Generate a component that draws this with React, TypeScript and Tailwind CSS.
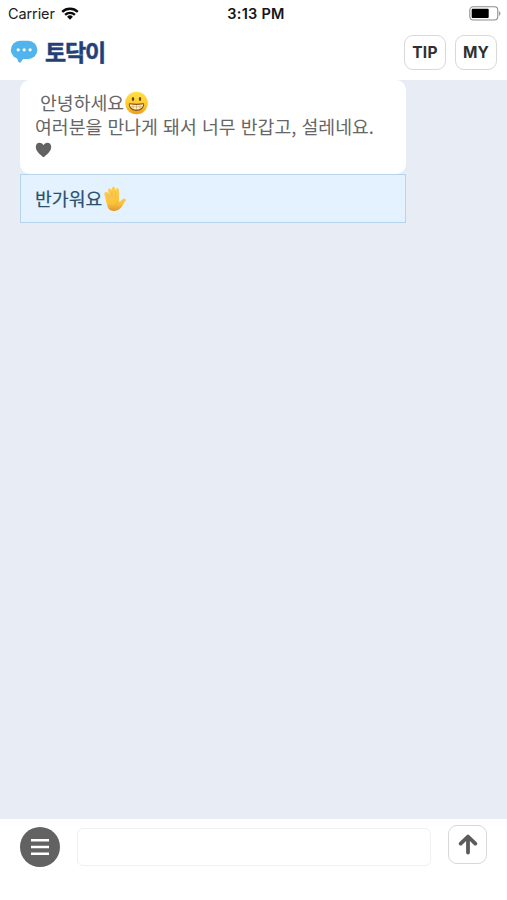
import React from 'react';

const WifiIcon: React.FC = () => (
  <svg className="-mt-[2px]" width="18" height="13" viewBox="0 0 18 13" fill="none" stroke="#0a0a0a" strokeWidth="2.3">
    <path d="M1.2 4.9a11.2 11.2 0 0 1 15.6 0" />
    <path d="M4.1 7.9a7 7 0 0 1 9.8 0" />
    <path d="M9 12.7 6.1 9.8a4.1 4.1 0 0 1 5.8 0z" fill="#0a0a0a" stroke="none" />
  </svg>
);

const BatteryIcon: React.FC = () => (
  <svg className="-mt-[2px]" width="32" height="15" viewBox="0 0 32 15">
    <rect x="0.8" y="0.8" width="28" height="13.2" rx="3.4" fill="#fff" stroke="#8c8c8c" strokeWidth="1.1" />
    <rect x="2.7" y="2.7" width="17" height="9.4" rx="1" fill="#000" />
    <path d="M30.2 5.2c1.6.5 1.6 4 0 4.5z" fill="#8c8c8c" />
  </svg>
);

const LogoIcon: React.FC = () => (
  <svg width="28" height="24" viewBox="0 0 28 24">
    <rect x="0.8" y="0.8" width="26.6" height="18.2" rx="9.1" fill="#51b4ed" />
    <path d="M6.6 17.5c1 1.400 1.500 5.200 3.200 5.200s2.200-3.200 3.600-4z" fill="#51b4ed" />
    <circle cx="8.2" cy="9.8" r="1.600" fill="#fff" />
    <circle cx="14.1" cy="9.8" r="1.600" fill="#fff" />
    <circle cx="20.1" cy="9.8" r="1.600" fill="#fff" />
  </svg>
);

const GrinEmoji: React.FC = () => (
  <svg width="25" height="24" viewBox="0 0 24 24">
    <defs>
      <linearGradient id="face" x1="0" y1="0" x2="0" y2="1">
        <stop offset="0" stopColor="#ffe146" />
        <stop offset="0.6" stopColor="#ffc92c" />
        <stop offset="1" stopColor="#f09a1d" />
      </linearGradient>
    </defs>
    <circle cx="12" cy="12" r="11.3" fill="url(#face)" />
    <ellipse cx="8.5" cy="8" rx="1.2" ry="1.9" fill="#6a3d12" />
    <ellipse cx="15.5" cy="8" rx="1.2" ry="1.9" fill="#6a3d12" />
    <path d="M4.3 13.2c0-.8.5-1 1.3-.9 4.2.6 8.6.6 12.800 0 .8-.1 1.300.1 1.300.9-.2 4-3.300 6.700-7.700 6.700s-7.500-2.700-7.700-6.700z" fill="#8a5314" />
    <path d="M5.300 13.300c4.400.8 9 .8 13.400 0-.2 3.200-2.900 5.300-6.700 5.300s-6.500-2.100-6.700-5.300z" fill="#fff3d0" />
    <path d="M5.600 15.800h12.800M8.500 13.800v4M12 14v4.500M15.500 13.800v4" stroke="#c79e5c" strokeWidth="0.6" />
  </svg>
);

const HandEmoji: React.FC = () => (
  <svg className="ml-px" width="25" height="26" viewBox="0 0 25 26">
    <defs>
      <linearGradient id="hand" gradientUnits="userSpaceOnUse" x1="0" y1="0" x2="0" y2="25">
        <stop offset="0" stopColor="#ffcf4d" />
        <stop offset="0.7" stopColor="#fbc23c" />
        <stop offset="1" stopColor="#e2952a" />
      </linearGradient>
    </defs>
    <g stroke="url(#hand)" strokeWidth="3.5" strokeLinecap="round">
      <path d="M3.1 7.800 5.400 17" />
      <path d="M6.800 4.200 8 14" />
      <path d="M10.500 2.400 11 13" />
      <path d="M14.300 4.100 14.200 14" />
    </g>
    <path
      d="M3.200 13.500c2-2 4-3.500 8-3.500 2.500 0 4.300.4 4.700 1.500l.3 4.600c1.400-.2 2.500-2.900 4.600-3.300 1.800-.3 2.500.9 1.800 2-1.500 1.800-2.800 4.600-4.700 7-2.700 3.600-9.300 4.300-12.200 1.200C4 20.800 3.900 17 3.200 13.500z"
      fill="url(#hand)"
    />
    <path d="M5.900 12 4.900 7.500M9.100 11 8.600 4.500M12.600 11 12.500 4.800M16.100 16.200c-2.200.6-3.200 1.800-3.200 3.800" fill="none" stroke="#eaaa36" strokeWidth="0.6" />
  </svg>
);

const HeartIcon: React.FC = () => (
  <svg className="mt-1" width="17" height="16" viewBox="0 0 17 16">
    <path d="M8.5 15.300C5.700 12.800.8 9.300.8 4.900.8 2.300 2.400.7 4.500.7c1.900 0 3.200 1 4 2.600.8-1.600 2.100-2.600 4-2.600 2.100 0 3.700 1.600 3.700 4.200 0 4.400-4.900 7.900-7.700 10.400z" fill="#626262" />
  </svg>
);

const headerButtons = ['TIP', 'MY'];

const StatusBar: React.FC = () => (
  <div className="grid h-7 grid-cols-3 items-center pl-2 pr-[6px] text-black">
    <div className="flex items-center gap-[6px]">
      <span className="text-[14.5px] leading-none tracking-[-0.1px] text-[#202020]">Carrier</span>
      <WifiIcon />
    </div>
    <div className="pl-[3px] text-center text-[14.5px] font-semibold leading-none tracking-[0.25px] text-[#151515]">3:13 PM</div>
    <div className="flex justify-end">
      <BatteryIcon />
    </div>
  </div>
);

const Header: React.FC = () => (
  <header className="flex h-[52px] items-center justify-between px-[10px] pb-1">
    <div className="flex items-center gap-[7px]">
      <LogoIcon />
      <h1 className="-mt-[2px] font-['Noto_Sans_CJK_KR',sans-serif] text-[23px] font-bold leading-none tracking-[-1.1px] text-[#233f78] [-webkit-text-stroke:0.5px_#233f78]">
        토닥이
      </h1>
    </div>
    <div className="flex gap-[9px]">
      {headerButtons.map((label) => (
        <button
          key={label}
          className="h-[35px] w-[42px] rounded-[9px] border border-[#d8d8d8] bg-white pt-[2px] font-['Inter',sans-serif] text-[15.5px] font-bold leading-none tracking-[0.2px] text-[#303030]"
        >
          {label}
        </button>
      ))}
    </div>
  </header>
);

const App: React.FC = () => {
  return (
    <div className="flex h-[900px] w-[507px] flex-col overflow-hidden bg-white font-['Inter','Noto_Sans_CJK_KR',sans-serif]">
      <StatusBar />
      <Header />
      <main className="h-[739px] bg-[#e7ecf5] pl-5 font-['Noto_Sans_CJK_KR',sans-serif] text-[18.3px]">
        <div className="h-[94px] w-[386px] rounded-[10px] bg-white px-[15px] pt-[11px] leading-[23.5px] text-[#666]">
          <p className="flex h-[23.5px] pl-[5px]">
            <span>안녕하세요</span>
            <GrinEmoji />
          </p>
          <p className="whitespace-nowrap [word-spacing:1.1px]">여러분을 만나게 돼서 너무 반갑고, 설레네요.</p>
          <HeartIcon />
        </div>
        <button className="flex h-[49px] w-[386px] items-center border border-[#b6d4eb] bg-[#e3f2fe] px-[14px] text-[#29506f]">
          <span className="[-webkit-text-stroke:0.2px_#29506f]">반가워요</span>
          <HandEmoji />
        </button>
      </main>
      <footer className="flex h-[81px] items-start pl-5 pt-[6px]">
        <button className="mt-[2px] flex size-10 items-center justify-center rounded-full bg-[#626262]">
          <svg width="18" height="18" viewBox="0 0 18 18" stroke="#fff" strokeWidth="2.4">
            <path d="M0 2.300h18M0 9h18M0 15.700h18" />
          </svg>
        </button>
        <input className="ml-[17px] mt-[3px] h-[38px] w-[354px] rounded-md border border-[#f0f0f0] bg-white px-3 outline-none" />
        <button className="ml-[17px] flex size-[39px] items-center justify-center rounded-[9px] border border-[#d8d8d8] bg-white">
          <svg width="20" height="21" viewBox="0 0 20 21" fill="none" stroke="#5b5b5b" strokeWidth="3.8" strokeLinecap="round" strokeLinejoin="round">
            <path d="M10 18.500V3M2.700 9.600 10 2.500l7.300 7.100" />
          </svg>
        </button>
      </footer>
    </div>
  );
};

export default App;
